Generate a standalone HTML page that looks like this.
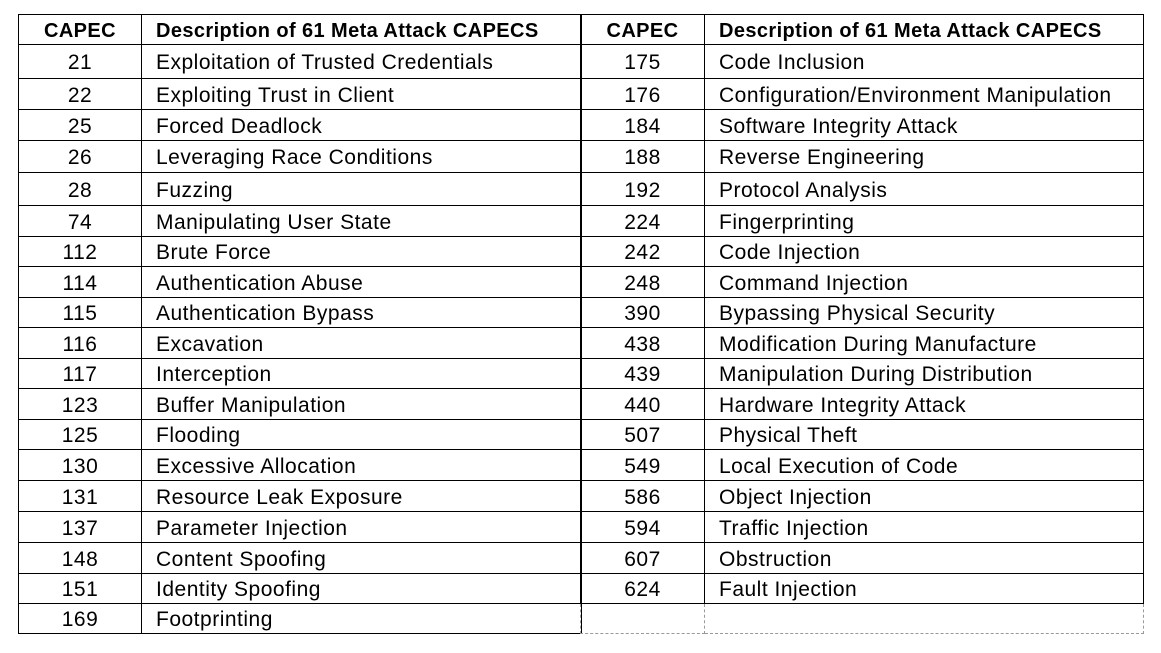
<!DOCTYPE html>
<html><head><style>
body{margin:0;background:#fff;width:1161px;height:653px;position:relative;overflow:hidden;font-family:"Liberation Sans",sans-serif;font-size:21px;letter-spacing:0.5px;color:#000}
table{position:absolute;border-collapse:collapse;table-layout:fixed}
td{border:1px solid #000;padding:2px 0 0 0;white-space:nowrap;overflow:hidden;vertical-align:middle;line-height:1}
td.n{text-align:center}
td.d{padding-left:14px}
th{border:1px solid #000;font-weight:bold;padding:2px 0 0 0;white-space:nowrap;font-size:20px;letter-spacing:0.4px;line-height:1}
th.d{text-align:left;padding-left:14px}
td.e{border:1px dashed #999}
</style></head><body>
<table style="left:18px;top:14px;width:563px">
<colgroup><col style="width:123px"><col style="width:440px"></colgroup>
<tr style="height:30px"><th>CAPEC</th><th class="d">Description of 61 Meta Attack CAPECS</th></tr>
<tr style="height:34px"><td class="n">21</td><td class="d">Exploitation of Trusted Credentials</td></tr>
<tr style="height:31px"><td class="n">22</td><td class="d">Exploiting Trust in Client</td></tr>
<tr style="height:31px"><td class="n">25</td><td class="d">Forced Deadlock</td></tr>
<tr style="height:32px"><td class="n">26</td><td class="d">Leveraging Race Conditions</td></tr>
<tr style="height:33px"><td class="n">28</td><td class="d">Fuzzing</td></tr>
<tr style="height:31px"><td class="n">74</td><td class="d">Manipulating User State</td></tr>
<tr style="height:30px"><td class="n">112</td><td class="d">Brute Force</td></tr>
<tr style="height:31px"><td class="n">114</td><td class="d">Authentication Abuse</td></tr>
<tr style="height:30px"><td class="n">115</td><td class="d">Authentication Bypass</td></tr>
<tr style="height:31px"><td class="n">116</td><td class="d">Excavation</td></tr>
<tr style="height:30px"><td class="n">117</td><td class="d">Interception</td></tr>
<tr style="height:31px"><td class="n">123</td><td class="d">Buffer Manipulation</td></tr>
<tr style="height:30px"><td class="n">125</td><td class="d">Flooding</td></tr>
<tr style="height:31px"><td class="n">130</td><td class="d">Excessive Allocation</td></tr>
<tr style="height:31px"><td class="n">131</td><td class="d">Resource Leak Exposure</td></tr>
<tr style="height:31px"><td class="n">137</td><td class="d">Parameter Injection</td></tr>
<tr style="height:31px"><td class="n">148</td><td class="d">Content Spoofing</td></tr>
<tr style="height:30px"><td class="n">151</td><td class="d">Identity Spoofing</td></tr>
<tr style="height:30px"><td class="n">169</td><td class="d">Footprinting</td></tr>
</table>
<table style="left:580px;top:14px;width:563px">
<colgroup><col style="width:124px"><col style="width:439px"></colgroup>
<tr style="height:30px"><th>CAPEC</th><th class="d">Description of 61 Meta Attack CAPECS</th></tr>
<tr style="height:34px"><td class="n">175</td><td class="d">Code Inclusion</td></tr>
<tr style="height:31px"><td class="n">176</td><td class="d">Configuration/Environment Manipulation</td></tr>
<tr style="height:31px"><td class="n">184</td><td class="d">Software Integrity Attack</td></tr>
<tr style="height:32px"><td class="n">188</td><td class="d">Reverse Engineering</td></tr>
<tr style="height:33px"><td class="n">192</td><td class="d">Protocol Analysis</td></tr>
<tr style="height:31px"><td class="n">224</td><td class="d">Fingerprinting</td></tr>
<tr style="height:30px"><td class="n">242</td><td class="d">Code Injection</td></tr>
<tr style="height:31px"><td class="n">248</td><td class="d">Command Injection</td></tr>
<tr style="height:30px"><td class="n">390</td><td class="d">Bypassing Physical Security</td></tr>
<tr style="height:31px"><td class="n">438</td><td class="d">Modification During Manufacture</td></tr>
<tr style="height:30px"><td class="n">439</td><td class="d">Manipulation During Distribution</td></tr>
<tr style="height:31px"><td class="n">440</td><td class="d">Hardware Integrity Attack</td></tr>
<tr style="height:30px"><td class="n">507</td><td class="d">Physical Theft</td></tr>
<tr style="height:31px"><td class="n">549</td><td class="d">Local Execution of Code</td></tr>
<tr style="height:31px"><td class="n">586</td><td class="d">Object Injection</td></tr>
<tr style="height:31px"><td class="n">594</td><td class="d">Traffic Injection</td></tr>
<tr style="height:31px"><td class="n">607</td><td class="d">Obstruction</td></tr>
<tr style="height:30px"><td class="n">624</td><td class="d">Fault Injection</td></tr>
<tr style="height:30px"><td class="e"></td><td class="e"></td></tr>
</table>
</body></html>
